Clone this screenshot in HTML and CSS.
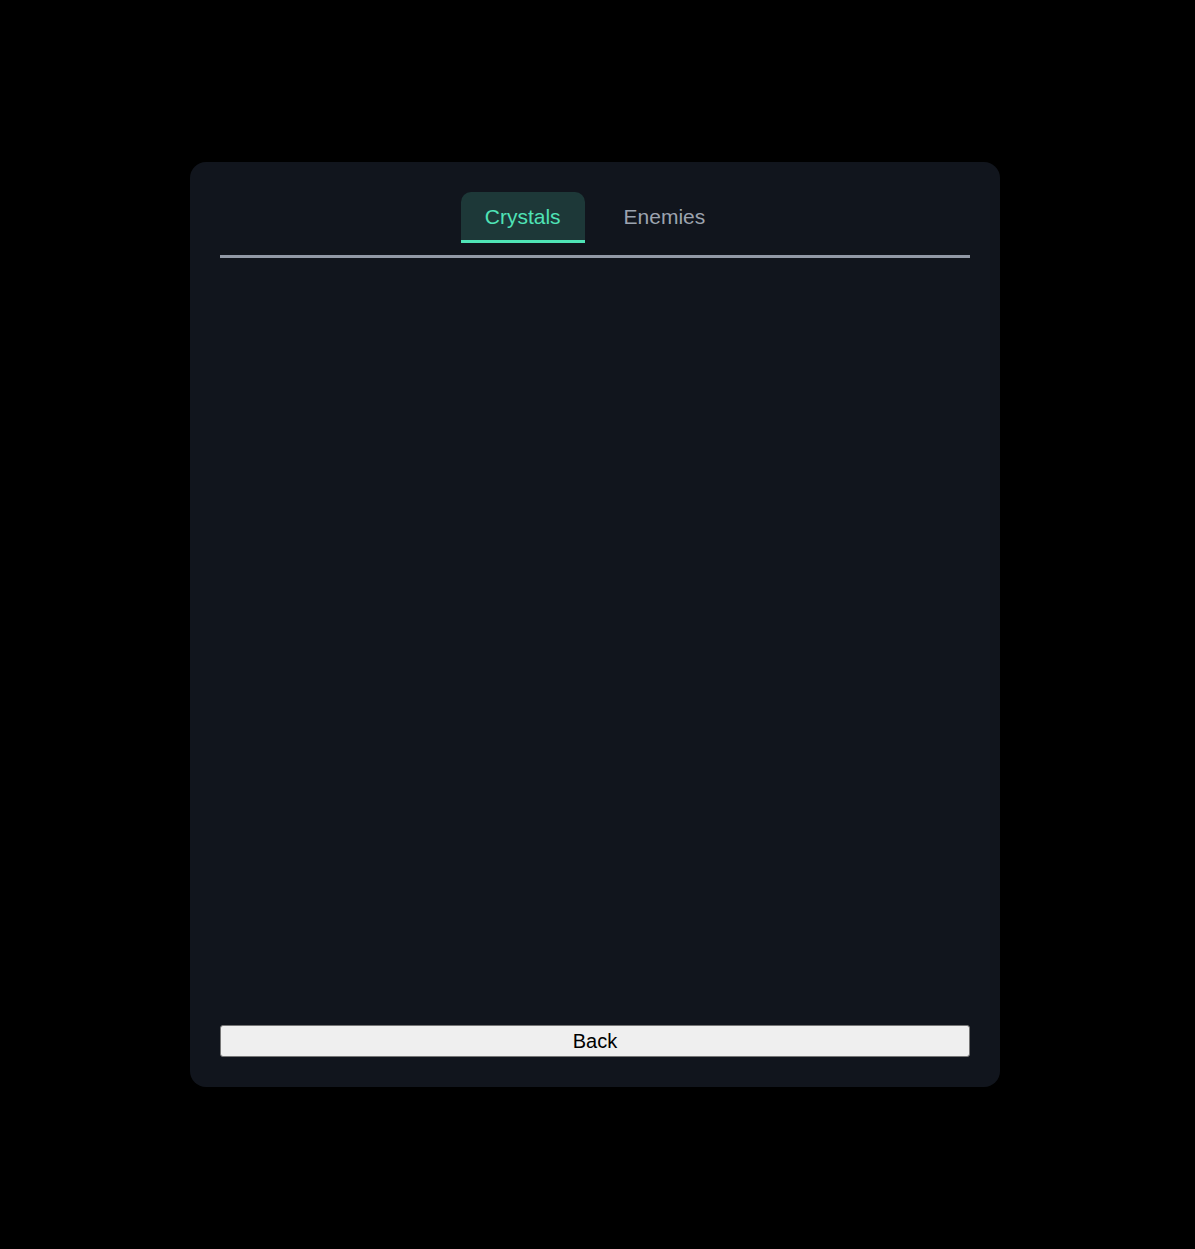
FILE: index.html
```html
<!DOCTYPE html>
<html lang="en">
<head>
    <meta charset="UTF-8">
    <meta name="viewport" content="width=device-width, initial-scale=1.0">
    <title>Codex</title>
    <link rel="stylesheet" href="styles.css">
</head>
<body>
    <div class="screen">
        <div class="panel">
            <!-- Tab bar -->
            <div class="tabs">
                <button class="tab active">Crystals</button>
                <button class="tab">Enemies</button>
            </div>
            <div class="divider"></div>

            <!-- Tab content (empty for now) -->
            <div class="tab-content"></div>

            <button class="back-btn">Back</button>
        </div>
    </div>
</body>
</html>
```

FILE: styles.css
```css
* {
    margin: 0;
    padding: 0;
    box-sizing: border-box;
}

body {
    background: #000;
    font-family: "Liberation Sans", Arial, sans-serif;
}

.screen {
    display: flex;
    justify-content: center;
    align-items: center;
    min-height: 100vh;
    padding-right: 5px;
}

.panel {
    width: 810px;
    height: 925px;
    background: #11151d;
    border-radius: 16px;
    padding: 30px;
    display: flex;
    flex-direction: column;
}

/* Tabs */
.tabs {
    display: flex;
    justify-content: center;
    gap: 15px;
}

.tab {
    font-family: inherit;
    font-size: 21px;
    height: 51px;
    padding: 1px 24px 0;
    border: none;
    border-bottom: 3px solid transparent;
    border-radius: 10px 10px 0 0;
    background: transparent;
    color: #9ca3af;
    cursor: pointer;
}

.tab.active {
    background: #1d3838;
    color: #4fe3b6;
    border-bottom-color: #4fe3b6;
}

.divider {
    height: 3px;
    margin-top: 12px;
    background: #9299a6;
}

.tab-content {
    flex: 1;
}

.back-btn {
    height: 32px;
    width: 100%;
    font-family: inherit;
    font-size: 20px;
    color: #000;
    background: #efefef;
    border: 1px solid #767676;
    border-radius: 3px;
    cursor: pointer;
}
```
